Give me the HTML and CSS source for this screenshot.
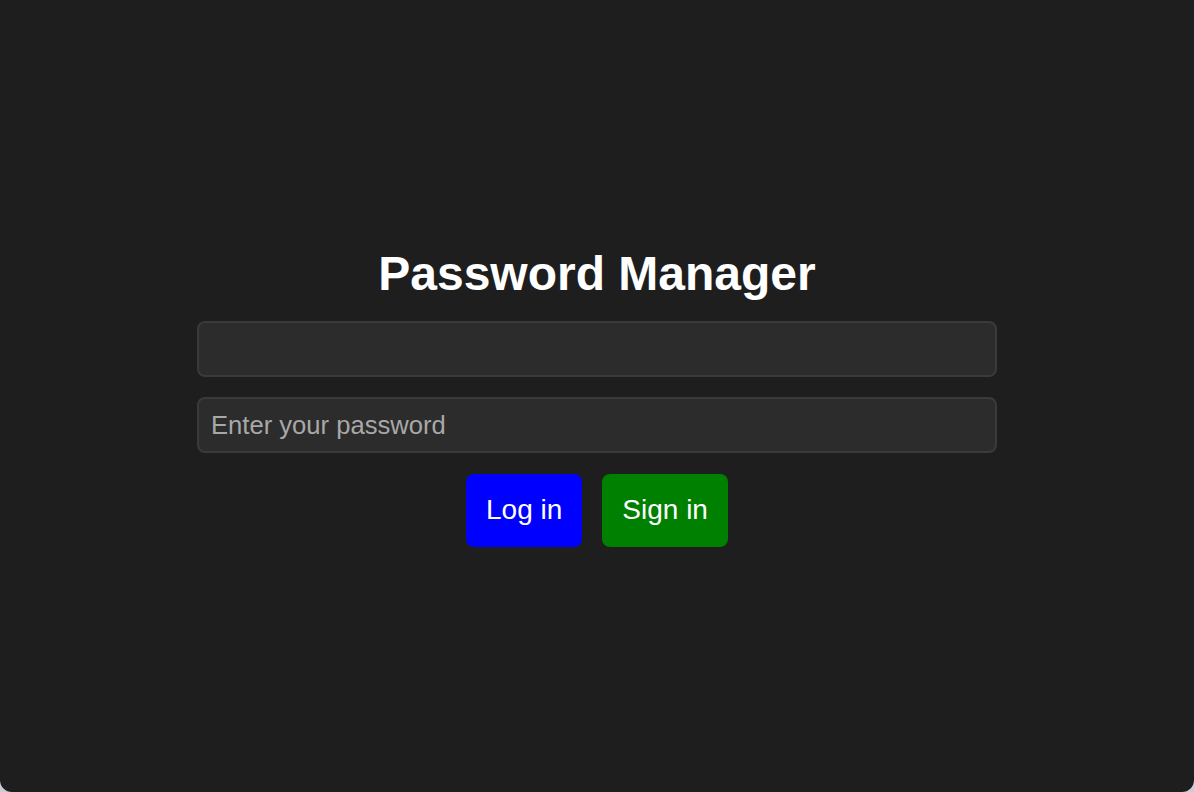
FILE: index.html
```html
<!DOCTYPE html>
<html lang="en">
<head>
<meta charset="utf-8">
<title>Password Manager</title>
<link rel="stylesheet" href="styles.css">
</head>
<body>
<main class="app">
  <div class="panel">
    <h1 class="title">Password Manager</h1>
    <input class="field" type="text" aria-label="Username">
    <input class="field field-last" type="password" placeholder="Enter your password">
    <div class="actions">
      <button class="btn btn-login" type="button">Log in</button>
      <button class="btn btn-signin" type="button">Sign in</button>
    </div>
  </div>
</main>
</body>
</html>
```

FILE: styles.css
```css
html {
  background: #c9cdd6;
  height: 100%;
}
body {
  margin: 0;
  height: 100%;
  font-family: "Liberation Sans", Arial, sans-serif;
}
.app {
  height: 100%;
  background: #1e1e1e;
  border-radius: 0 0 12px 12px;
  display: flex;
  align-items: center;
  justify-content: center;
}
.panel {
  width: 800px;
  display: flex;
  flex-direction: column;
  align-items: center;
}
.title {
  margin: 0 0 19px;
  color: #ffffff;
  font-size: 48px;
  font-weight: bold;
  line-height: 56px;
}
.field {
  box-sizing: border-box;
  width: 800px;
  height: 56px;
  margin: 0 0 20px;
  padding: 1px 12px 0;
  background: #2c2c2c;
  border: 2px solid #3a3a3a;
  border-radius: 8px;
  color: #ffffff;
  font-family: "Liberation Sans", Arial, sans-serif;
  font-size: 25.6px;
  outline: none;
}
.field-last {
  margin-bottom: 21px;
}
.field::placeholder {
  color: #a8a8a8;
}
.actions {
  display: flex;
  gap: 20px;
}
.btn {
  height: 73px;
  padding: 0 20px;
  border: none;
  border-radius: 8px;
  color: #ffffff;
  font-family: "Liberation Sans", Arial, sans-serif;
  font-size: 28px;
}
.btn-login {
  background: #0000ff;
}
.btn-signin {
  background: #008000;
}
```
